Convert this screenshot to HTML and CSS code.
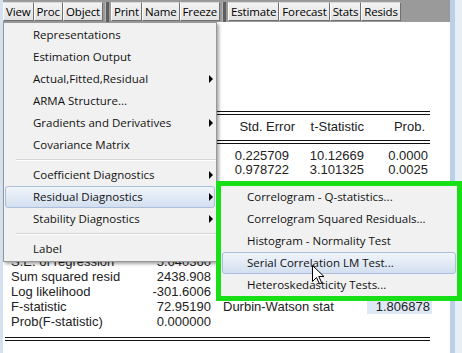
FILE: index.html
```html
<!DOCTYPE html>
<html lang="en">

<head>
  <meta charset="UTF-8">
  <title>Equation output</title>
  <link rel="stylesheet" href="styles.css">
</head>

<body>
  <div class="win">
    <div class="toolbar">
      <button class="tb">View</button>
      <button class="tb">Proc</button>
      <button class="tb">Object</button>
      <span class="tb-sep"></span>
      <button class="tb">Print</button>
      <button class="tb">Name</button>
      <button class="tb">Freeze</button>
      <span class="tb-sep"></span>
      <button class="tb">Estimate</button>
      <button class="tb">Forecast</button>
      <button class="tb">Stats</button>
      <button class="tb">Resids</button>
    </div>

    <!-- estimation output behind the menus (covered cells left empty) -->
    <div class="output">
      <div class="dbl top"></div>
      <div class="coef head">
        <span></span>
        <span></span>
        <span class="hd-se">Std. Error</span>
        <span>t-Statistic</span>
        <span class="hd-p">Prob.</span>
      </div>
      <div class="dbl mid"></div>
      <div class="coef first">
        <span></span><span></span><span>0.225709</span><span>10.12669</span><span>0.0000</span>
      </div>
      <div class="coef">
        <span></span><span></span><span>0.978722</span><span>3.101325</span><span>0.0025</span>
      </div>

      <div class="stats first">
        <span>S.E. of regression</span><span>5.640360</span><span></span><span></span>
      </div>
      <div class="stats">
        <span>Sum squared resid</span><span>2438.908</span><span></span><span></span>
      </div>
      <div class="stats">
        <span>Log likelihood</span><span>-301.6006</span><span></span><span></span>
      </div>
      <div class="stats">
        <span>F-statistic</span><span>72.95190</span><span>Durbin-Watson stat</span><span class="dw">1.806878</span>
      </div>
      <div class="stats">
        <span>Prob(F-statistic)</span><span>0.000000</span><span></span><span></span>
      </div>
      <div class="dbl bottom"></div>
    </div>
  </div>

  <!-- View menu -->
  <div class="menu main-menu">
    <div class="item">Representations</div>
    <div class="item">Estimation Output</div>
    <div class="item sub">Actual,Fitted,Residual</div>
    <div class="item">ARMA Structure...</div>
    <div class="item sub">Gradients and Derivatives</div>
    <div class="item">Covariance Matrix</div>
    <div class="sep"></div>
    <div class="item sub">Coefficient Diagnostics</div>
    <div class="item sub hot">Residual Diagnostics</div>
    <div class="item sub">Stability Diagnostics</div>
    <div class="sep"></div>
    <div class="item">Label</div>
  </div>

  <!-- Residual Diagnostics submenu, boxed in green -->
  <div class="menu sub-menu">
    <div class="item">Correlogram - Q-statistics...</div>
    <div class="item">Correlogram Squared Residuals...</div>
    <div class="item">Histogram - Normality Test</div>
    <div class="item hot">Serial Correlation LM Test...</div>
    <div class="item">Heteroskedasticity Tests...</div>
  </div>

  <svg class="cursor" width="13" height="20" viewBox="0 0 13 20">
    <path d="M0.5 0.5 L0.5 16.5 L4.5 12.5 L7.5 19 L9.8 18 L6.8 11.5 L12 11.5 Z" fill="#fff" stroke="#000" stroke-width="1" stroke-linejoin="miter"/>
  </svg>
</body>

</html>
```

FILE: styles.css
```css
body {
  margin: 0;
  width: 462px;
  height: 353px;
  overflow: hidden;
  background: #e6eef7;
  font-family: 'Liberation Sans', Arial, sans-serif;
}

/* Window */
.win {
  width: 447px;
  height: 353px;
  background: #fff;
  border-left: 3px solid #d3e1f0;
  border-right: 5px solid #b9d0e9;
}

/* Toolbar */
.toolbar {
  display: flex;
  align-items: flex-start;
  height: 22px;
  padding-top: 2px;
  box-sizing: border-box;
  background: #9a9a9a;
}

.tb {
  margin: 0;
  height: 19px;
  padding: 0 2px;
  font-family: 'Open Sans', sans-serif;
  font-size: 11.5px;
  letter-spacing: -0.15px;
  line-height: 16px;
  color: #000;
  background: linear-gradient(#f3f3f3, #e2e2e2);
  border: 1px solid #6f6f6f;
  border-top-color: #d8d8d8;
  border-left-color: #fafafa;
}

.tb-sep {
  width: 3px;
  height: 20px;
  margin: 0 2px;
  background: #5e5e5e;
  border-left: 1px solid #b5b5b5;
}

/* Output table */
.output {
  width: 425px;
  padding-left: 2px;
  font-size: 13px;
  color: #222;
}

.dbl {
  height: 2px;
  border-top: 1px solid #111;
  border-bottom: 1px solid #111;
}

.dbl.top {
  margin-top: 89px;
}

.dbl.mid {
  margin-top: 6px;
}

.dbl.bottom {
  margin-top: 8px;
}

.coef {
  display: grid;
  grid-template-columns: 115px 91px 78px 75px 64px;
  line-height: 14px;
}

.coef span {
  text-align: right;
}

.coef.head {
  margin-top: 5px;
}

.coef.first {
  margin-top: 5px;
}

.hd-se {
  margin-right: -6px;
}

.hd-p {
  padding-right: 3px;
}

.stats {
  display: grid;
  grid-template-columns: 130px 76px 156px 65px;
  line-height: 15px;
}

/* rows hidden under the menus take up this space */
.stats.first {
  margin-top: 77px;
}

.stats span:nth-child(1) {
  padding-left: 6px;
  white-space: nowrap;
}

.stats span:nth-child(2) {
  text-align: right;
}

.stats span:nth-child(3) {
  padding-left: 12px;
  white-space: nowrap;
}

.stats span:nth-child(4) {
  text-align: right;
  padding-right: 2px;
}

.stats .dw {
  background: #dfe9f6;
}

/* Menus */
.menu {
  position: absolute;
  background: #f1f1f1;
  border: 1px solid #979797;
  box-shadow: 2px 2px 3px rgba(0, 0, 0, 0.35);
  font-family: 'Open Sans', sans-serif;
  font-size: 11.5px;
  color: #111;
}

.main-menu {
  left: 3px;
  top: 22px;
  width: 212px;
  padding: 1px 0;
}

.item {
  position: relative;
  height: 22px;
  line-height: 20px;
  margin: 0 1px;
  padding-left: 27px;
  border: 1px solid transparent;
  box-sizing: border-box;
  white-space: nowrap;
}

.item.sub::after {
  content: '';
  position: absolute;
  right: 1px;
  top: 6px;
  border-left: 4px solid #000;
  border-top: 4px solid transparent;
  border-bottom: 4px solid transparent;
}

.item.hot {
  border-color: #a9bfdc;
  border-radius: 3px;
  background: linear-gradient(#f1f5fb, #d3dff0);
}

.sep {
  height: 8px;
  margin-left: 12px;
  position: relative;
}

.sep::before {
  content: '';
  position: absolute;
  left: 0;
  right: 0;
  top: 3px;
  border-top: 1px solid #d5d5d5;
  border-bottom: 1px solid #fff;
}

.sub-menu {
  left: 216px;
  top: 181px;
  width: 236px;
  border: 5px solid #18df18;
  box-shadow: none;
}

.sub-menu .item {
  padding-left: 24px;
}

.cursor {
  position: absolute;
  left: 312px;
  top: 265px;
}
```
